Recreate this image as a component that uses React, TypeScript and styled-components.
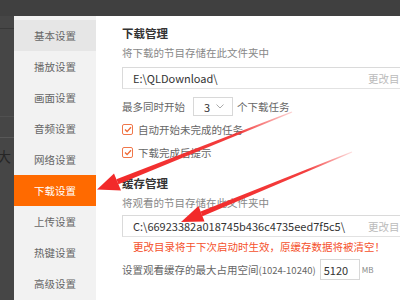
import styled, { createGlobalStyle } from 'styled-components';

const GlobalStyle = createGlobalStyle`
  html, body {
    margin: 0;
    padding: 0;
  }
  body {
    width: 400px;
    height: 300px;
    overflow: hidden;
    background: #fff;
    font-family: "Noto Sans CJK SC", "Noto Sans", sans-serif;
  }
`;

const Page = styled.div`
  position: relative;
  width: 400px;
  height: 300px;
  display: flex;
  flex-direction: column;
  overflow: hidden;
`;

const TopBar = styled.div`
  height: 16px;
  flex-shrink: 0;
  background: #404040;
`;

const Main = styled.div`
  flex: 1;
  display: flex;
  min-height: 0;
`;

const LeftStrip = styled.div`
  width: 14px;
  flex-shrink: 0;
  background: #464646;
  display: flex;
  flex-direction: column;
  overflow: hidden;
`;

const Rule = styled.div<{ $top: number; $color: string }>`
  margin-top: ${(p) => p.$top}px;
  height: 1px;
  background: ${(p) => p.$color};
`;

const StripGlyph = styled.span`
  margin: 10px 0 0 -3px;
  font-size: 14px;
  line-height: 16px;
  color: #262626;
`;

const Sidebar = styled.div`
  width: 82px;
  flex-shrink: 0;
  background: #f2f2f2;
  padding-top: 4px;
`;

const NavItem = styled.div<{ $active?: boolean; $current?: boolean }>`
  height: 31px;
  display: flex;
  align-items: center;
  justify-content: center;
  font-size: 10.5px;
  color: ${(p) => (p.$active ? '#fff' : '#666')};
  background: ${(p) => (p.$active ? '#ff6a00' : p.$current ? '#e6e6e6' : 'transparent')};
`;

const Content = styled.div`
  flex: 1;
  padding-left: 26px;
  overflow: hidden;
  display: flex;
  flex-direction: column;
`;

const Title = styled.div<{ $top: number }>`
  margin-top: ${(p) => p.$top}px;
  font-size: 11.5px;
  line-height: 16px;
  font-weight: bold;
  color: #333;
`;

const Hint = styled.div`
  margin-top: 4px;
  font-size: 10.5px;
  line-height: 16px;
  color: #888;
  white-space: nowrap;
`;

const PathBox = styled.div<{ $top: number }>`
  margin-top: ${(p) => p.$top}px;
  width: 300px;
  height: 22px;
  box-sizing: border-box;
  border: 1px solid #dadada;
  border-bottom-color: #e2e2e2;
  display: flex;
  align-items: center;
  flex-shrink: 0;
`;

const PathText = styled.span`
  flex: 1;
  padding-left: 10px;
  font-size: 11px;
  color: #333;
  white-space: nowrap;
`;

const ChangeBtn = styled.span`
  width: 53px;
  font-size: 10.5px;
  color: #bbb;
  white-space: nowrap;
  overflow: hidden;
`;

const Row = styled.div<{ $top: number; $h: number }>`
  margin-top: ${(p) => p.$top}px;
  height: ${(p) => p.$h}px;
  display: flex;
  align-items: center;
  font-size: 10.5px;
  color: #666;
  white-space: nowrap;
`;

const Select = styled.div`
  width: 40px;
  height: 19px;
  box-sizing: border-box;
  margin: 0 4px 0 8px;
  border: 1px solid #d8d8d8;
  display: flex;
  align-items: center;
  padding-left: 10px;
  gap: 6px;
  font-size: 11px;
  color: #333;
`;

const Box = styled.span`
  width: 11px;
  height: 11px;
  box-sizing: border-box;
  border: 1px solid #f0774a;
  border-radius: 2px;
  display: flex;
  align-items: center;
  justify-content: center;
  margin-right: 5px;
  background: #fff;
`;

const Warning = styled.div`
  margin-top: 2px;
  padding-left: 11px;
  font-size: 10.5px;
  line-height: 16px;
  color: #f5512c;
  white-space: nowrap;
`;

const Small = styled.span`
  font-size: 9.5px;
`;

const SizeInput = styled.div`
  width: 40px;
  height: 21px;
  box-sizing: border-box;
  margin-left: 4px;
  border: 1px solid #d8d8d8;
  display: flex;
  align-items: center;
  padding-left: 3px;
  font-size: 11px;
  color: #333;
`;

const Unit = styled.span`
  margin-left: 2px;
  font-size: 8px;
  color: #888;
`;

const Overlay = styled.svg`
  position: absolute;
  left: 0;
  top: 0;
  pointer-events: none;
`;

const navItems = ['基本设置', '播放设置', '画面设置', '音频设置', '网络设置', '下载设置', '上传设置', '热键设置', '高级设置'];

const Check = () => (
  <svg width="8" height="7" viewBox="0 0 8 7">
    <path d="M1 3.6 L3.1 5.6 L7 1.2" fill="none" stroke="#ef6a36" strokeWidth="1.4" />
  </svg>
);

const Chevron = () => (
  <svg width="8" height="5" viewBox="0 0 8 5">
    <path d="M0.5 0.5 L4 4 L7.5 0.5" fill="none" stroke="#aaa" strokeWidth="1" />
  </svg>
);

const Arrows = () => (
  <Overlay width="400" height="300" viewBox="0 0 400 300">
    <defs>
      <linearGradient id="fade1" x1="292" y1="112" x2="117" y2="182" gradientUnits="userSpaceOnUse">
        <stop offset="0" stopColor="#f22a2a" stopOpacity="0.2" />
        <stop offset="0.3" stopColor="#f22a2a" stopOpacity="0.9" />
        <stop offset="1" stopColor="#f22a2a" />
      </linearGradient>
      <linearGradient id="fade2" x1="352" y1="152" x2="201" y2="214" gradientUnits="userSpaceOnUse">
        <stop offset="0" stopColor="#f22a2a" stopOpacity="0.15" />
        <stop offset="0.3" stopColor="#f22a2a" stopOpacity="0.9" />
        <stop offset="1" stopColor="#f22a2a" />
      </linearGradient>
    </defs>
    <polygon points="292.3,112.4 291.7,111.6 116.4,179.3 118.4,184.3" fill="url(#fade1)" />
    <polygon points="97,189.5 114,173.5 121,190.5" fill="#f22a2a" />
    <polygon points="352.2,152.5 351.8,151.5 200.6,211.4 202.4,216.2" fill="url(#fade2)" />
    <polygon points="181,222 198.5,206 204.5,221.5" fill="#f22a2a" />
  </Overlay>
);

export default function App() {
  return (
    <>
      <GlobalStyle />
      <Page>
        <TopBar />
        <Main>
          <LeftStrip>
            <Rule $top={12} $color="#383838" />
            <Rule $top={87} $color="#505050" />
            <Rule $top={20} $color="#585858" />
            <StripGlyph>大</StripGlyph>
          </LeftStrip>
          <Sidebar>
            {navItems.map((item, i) => (
              <NavItem key={item} $current={i === 0} $active={i === 5}>
                {item}
              </NavItem>
            ))}
          </Sidebar>
          <Content>
            <Title $top={9}>下载管理</Title>
            <Hint>将下载的节目存储在此文件夹中</Hint>
            <PathBox $top={6}>
              <PathText>E:\QLDownload\</PathText>
              <ChangeBtn>更改目录</ChangeBtn>
            </PathBox>
            <Row $top={8} $h={19}>
              最多同时开始
              <Select>
                3
                <Chevron />
              </Select>
              个下载任务
            </Row>
            <Row $top={5} $h={16}>
              <Box>
                <Check />
              </Box>
              自动开始未完成的任务
            </Row>
            <Row $top={7} $h={16}>
              <Box>
                <Check />
              </Box>
              下载完成后提示
            </Row>
            <Title $top={15}>缓存管理</Title>
            <Hint>将观看的节目存储在此文件夹中</Hint>
            <PathBox $top={4}>
              <PathText>C:\66923382a018745b436c4735eed7f5c5\</PathText>
              <ChangeBtn>更改目录</ChangeBtn>
            </PathBox>
            <Warning>更改目录将于下次启动时生效，原缓存数据将被清空！</Warning>
            <Row $top={4} $h={21}>
              设置观看缓存的最大占用空间<Small>(1024-10240)</Small>
              <SizeInput>5120</SizeInput>
              <Unit>MB</Unit>
            </Row>
          </Content>
        </Main>
        <Arrows />
      </Page>
    </>
  );
}
